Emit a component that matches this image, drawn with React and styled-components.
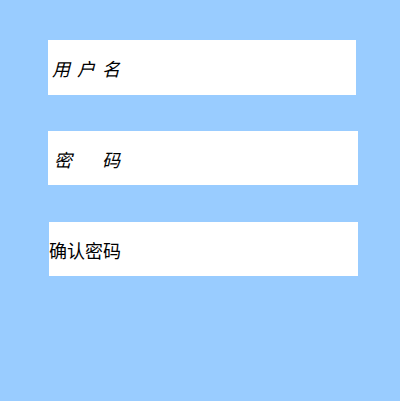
import React from "react";
import styled, { createGlobalStyle } from "styled-components";

const GlobalStyle = createGlobalStyle`
  html, body {
    margin: 0;
    padding: 0;
    background: #99ccff;
  }
  body {
    font-family: "Noto Sans CJK SC", "Noto Sans", sans-serif;
  }
`;

const Page = styled.div`
  min-height: 401px;
  background: #99ccff;
  padding-top: 40px;
  box-sizing: border-box;
  display: flex;
  flex-direction: column;
`;

const Field = styled.div`
  display: flex;
  align-items: center;
  width: ${(p) => p.w}px;
  height: ${(p) => p.h}px;
  margin-left: ${(p) => p.left}px;
  margin-top: ${(p) => p.mt || 0}px;
  background: #ffffff;
`;

const Label = styled.label`
  flex: 0 0 ${(p) => 120 - p.left}px;
  display: flex;
  justify-content: flex-end;
  padding-top: 1px;
  font-size: 18px;
  line-height: 20px;
  font-weight: 400;
  color: #000;
  font-style: ${(p) => (p.italic ? "italic" : "normal")};
  white-space: nowrap;
`;

const LabelText = styled.span`
  flex-shrink: 0;
  letter-spacing: ${(p) => p.spacing || 0}px;
  margin-right: ${(p) => -(p.spacing || 0)}px;
`;

const Input = styled.input`
  flex: 1;
  min-width: 0;
  height: 100%;
  border: none;
  outline: none;
  background: transparent;
  font-size: 16px;
  font-family: inherit;
  padding: 0 8px;
`;

const fields = [
  { label: "用户名", left: 48, w: 308, h: 55, mt: 0, spacing: 7, italic: true, type: "text" },
  { label: "密码", left: 48, w: 310, h: 54, mt: 36, spacing: 30, italic: true, type: "password" },
  { label: "确认密码", left: 49, w: 309, h: 54, mt: 37, spacing: 0, italic: false, type: "password" },
];

export default function App() {
  return (
    <>
      <GlobalStyle />
      <Page>
        {fields.map((f) => (
          <Field key={f.label} left={f.left} w={f.w} h={f.h} mt={f.mt}>
            <Label left={f.left} italic={f.italic}>
              <LabelText spacing={f.spacing}>{f.label}</LabelText>
            </Label>
            <Input type={f.type} />
          </Field>
        ))}
      </Page>
    </>
  );
}
